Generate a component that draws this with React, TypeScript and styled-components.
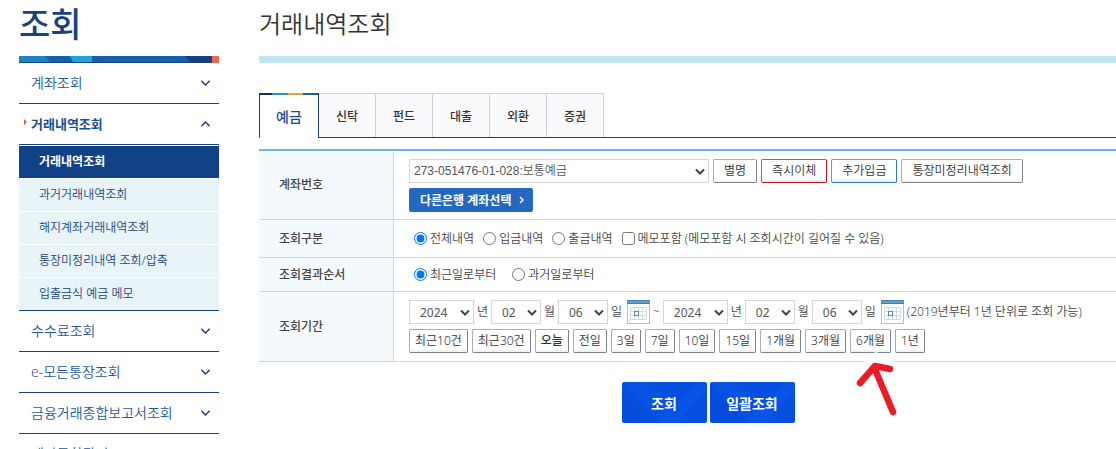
import React from 'react';
import styled, { createGlobalStyle, css } from 'styled-components';

const sans = '"Noto Sans", "Noto Sans CJK KR", sans-serif';

const GlobalStyle = createGlobalStyle`
  *, *::before, *::after { box-sizing: border-box; }
  body {
    margin: 0;
    background: #fff;
    color: #444;
    font-family: ${sans};
    font-size: 12px;
    line-height: 18px;
  }
  button, select, input { font-family: inherit; font-size: inherit; margin: 0; }
  ul { list-style: none; margin: 0; padding: 0; }
  h1, h2 { margin: 0; }
  a { color: inherit; text-decoration: none; }
`;

const Page = styled.div`
  display: flex;
  align-items: flex-start;
  gap: 40px;
  height: 100vh;
  padding-left: 19px;
  overflow: hidden;
`;

const Sidebar = styled.nav`
  flex: 0 0 200px;
  color: #1c4f8f;
`;

const SideTitle = styled.h1`
  height: 56px;
  color: #17427f;
  font-size: 34px;
  font-weight: 500;
  line-height: 48px;
`;

const Ribbon = styled.svg`
  display: block;
  width: 100%;
  height: 7px;
`;

const MenuLink = styled.a<{ $active?: boolean }>`
  position: relative;
  display: flex;
  align-items: center;
  justify-content: space-between;
  height: 41px;
  padding: 0 8px 0 12px;
  border-bottom: 1px solid #17427f;
  color: #1f5a9c;
  font-size: 14px;
  font-weight: 350;
  ${p => p.$active && css`
    font-size: 13px;
    font-weight: 700;
    color: #17508f;
    &::before {
      content: '';
      position: absolute;
      left: 5px;
      top: 15px;
      border: 3px solid transparent;
      border-left-color: #e0603f;
      border-right-width: 0;
    }
  `}
`;

const SubMenu = styled.ul`
  display: grid;
  gap: 1px;
  padding-top: 1px;
  border-bottom: 1px solid #17427f;
`;

const SubLink = styled.a<{ $active?: boolean }>`
  display: block;
  height: 32px;
  padding-left: 20px;
  background: ${p => (p.$active ? '#124286' : '#e9f4f9')};
  color: ${p => (p.$active ? '#fff' : '#1c4580')};
  font-weight: ${p => (p.$active ? 700 : 350)};
  line-height: 32px;
`;

const Main = styled.main`
  flex: 1 0 898px;
`;

const PageTitle = styled.h2`
  height: 63px;
  border-bottom: 7px solid #c0e6f2;
  color: #333;
  font-size: 24px;
  font-weight: 350;
  line-height: 48px;
`;

const Tabs = styled.div`
  display: flex;
  margin: 30px 0 11px;
  border-bottom: 1px solid #17427f;
`;

const Tab = styled.button<{ $active?: boolean }>`
  width: 57px;
  height: 44px;
  padding: 0;
  border: solid #ccd2de;
  border-width: 1px 1px 0 0;
  background: #fafafd;
  color: #333;
  font-weight: 500;
  ${p => p.$active && css`
    width: 60px;
    height: 45px;
    margin-bottom: -1px;
    border: solid #17427f;
    border-width: 0 1px;
    background:
      linear-gradient(90deg, #1d2c5c 0 12px, #2497b8 12px 28px, #e0a440 28px 43px, #1a6496 43px 58px) 0 0 / 100% 2px no-repeat,
      #fff;
    color: #1c4a8c;
    font-size: 14px;
  `}
`;

const FormTable = styled.table`
  width: 100%;
  border-collapse: separate;
  border-spacing: 0;
  border-top: 2px solid #6eb4e8;
`;

const HeadCell = styled.th`
  width: 135px;
  padding: 0 0 0 20px;
  border: solid #d0d6e2;
  border-width: 0 1px 1px 0;
  background: #f4f9fd;
  color: #444;
  font-weight: 500;
  text-align: left;
`;

const Cell = styled.td<{ $height: number }>`
  height: ${p => p.$height}px;
  padding: 0 0 0 15px;
  border-bottom: 1px solid #d0d6e2;
  font-weight: 350;
`;

const Stack = styled.div`
  display: grid;
  gap: 5px;
`;

const Line = styled.div<{ $gap?: number }>`
  display: flex;
  align-items: center;
  gap: ${p => p.$gap ?? 4}px;
  white-space: nowrap;
`;

const SelectBox = styled.span<{ $width: number }>`
  position: relative;
  display: inline-flex;
  width: ${p => p.$width}px;
  height: 24px;
  svg {
    position: absolute;
    right: 4px;
    top: 9px;
    pointer-events: none;
  }
`;

const Select = styled.select<{ $account?: boolean }>`
  appearance: none;
  width: 100%;
  padding: 0 0 0 ${p => (p.$account ? 4 : 10)}px;
  border: 1px solid #d3d6da;
  border-radius: 0;
  background: #fff;
  color: #555;
  font-weight: ${p => (p.$account ? 350 : 400)};
  ${p => p.$account && css`font-family: "Liberation Sans", "Noto Sans CJK KR", sans-serif;`}
`;

const tones = {
  grey: ['#a9adb5', '#7d8189', '#f1f3f5'],
  red: ['#e0444a', '#b8181f', '#fdeaea'],
  blue: ['#4ba3d9', '#2b7cb8', '#e4f3fb'],
};

const SmallButton = styled.button<{ $tone?: keyof typeof tones; $pad?: number; $bold?: boolean }>`
  height: 24px;
  padding: 0 ${p => p.$pad ?? 5}px;
  border: 1px solid ${p => tones[p.$tone ?? 'grey'][0]};
  border-right-color: ${p => tones[p.$tone ?? 'grey'][1]};
  border-bottom-color: ${p => tones[p.$tone ?? 'grey'][1]};
  border-radius: 2px;
  background: #fff;
  box-shadow: inset 0 -2px ${p => tones[p.$tone ?? 'grey'][2]};
  color: #333;
  font-weight: ${p => (p.$bold ? 500 : 350)};
  line-height: 20px;
`;

const OtherBankButton = styled.button`
  display: flex;
  align-items: center;
  justify-content: space-between;
  justify-self: start;
  width: 124px;
  height: 24px;
  padding: 0 9px 0 11px;
  border: 0;
  border-radius: 2px;
  background: #2568bf;
  color: #fff;
  font-weight: 700;
`;

const Choice = styled.label`
  display: inline-flex;
  align-items: center;
  gap: 3px;
  input { width: 13px; height: 13px; }
`;

const Choices = styled.div<{ $gap: number }>`
  display: flex;
  gap: ${p => p.$gap}px;
  padding-left: 5px;
`;

const CalendarButton = styled.button`
  display: flex;
  margin-left: 2px;
  padding: 0;
  border: 0;
  background: none;
`;

const Actions = styled.div`
  display: flex;
  justify-content: center;
  gap: 3px;
  margin-top: 20px;
`;

const ActionButton = styled.button`
  width: 85px;
  height: 41px;
  padding: 0;
  border: 0;
  border-radius: 2px;
  background:
    linear-gradient(135deg, transparent 60%, #0854e6 60% 75%, transparent 75%),
    linear-gradient(45deg, #044cdc 30%, #0652e3 30% 55%, #044ee0 55%);
  color: #fff;
  font-size: 14px;
  font-weight: 700;
`;

const Marked = styled.span`
  position: relative;
  display: inline-flex;
`;

const Pointer = styled.svg`
  position: absolute;
  left: 4px;
  top: 21px;
  pointer-events: none;
`;

const Chevron = ({ up }: { up?: boolean }) => (
  <svg width="11" height="8" viewBox="0 0 11 8" fill="none" stroke="#17427f" strokeWidth="1.5" aria-hidden="true">
    <path d={up ? 'M1.3 6.2 5.5 2l4.2 4.2' : 'M1.3 1.8 5.5 6l4.2-4.2'} />
  </svg>
);

const Calendar = () => (
  <svg width="23" height="24" viewBox="0 0 23 24" aria-hidden="true">
    <rect x=".5" y=".5" width="22" height="23" fill="#fff" stroke="#b9bec4" />
    <rect width="23" height="4" fill="#5f9fd0" />
    <path d="M0 .5h23M0 3.5h23" stroke="#4a80ad" />
    <path d="M3.5 7.5h16v12h-16zM3.5 11.5h16M3.5 15.5h16M7.5 7.5v12M11.5 7.5v12M15.5 7.5v12" fill="none" stroke="#d5dade" />
    <rect x="7.5" y="11.5" width="4" height="4" fill="#fff" stroke="#3f94cf" />
  </svg>
);

const DropDown = ({ label, width, options, account }: { label: string; width: number; options: string[]; account?: boolean }) => (
  <SelectBox $width={width}>
    <Select aria-label={label} $account={account}>
      {options.map(o => <option key={o}>{o}</option>)}
    </Select>
    <svg width="10" height="8" viewBox="0 0 10 8" fill="none" stroke="#444" strokeWidth="2" aria-hidden="true">
      <path d="m1 1.5 4 4 4-4" />
    </svg>
  </SelectBox>
);

const Unit = styled.span`
  width: 11px;
`;

const DateFields = ({ name }: { name: string }) => (
  <>
    <DropDown label={`${name} 년`} width={65} options={['2024', '2023', '2022', '2021', '2020', '2019']} /><Unit>년</Unit>
    <DropDown label={`${name} 월`} width={50} options={['02', '01', '03']} /><Unit>월</Unit>
    <DropDown label={`${name} 일`} width={50} options={['06', '05', '07']} /><Unit>일</Unit>
    <CalendarButton type="button" aria-label={`${name} 달력`}><Calendar /></CalendarButton>
  </>
);

const subItems = ['거래내역조회', '과거거래내역조회', '해지계좌거래내역조회', '통장미정리내역 조회/압축', '입출금식 예금 메모'];
const lowerItems = ['수수료조회', 'e-모든통장조회', '금융거래종합보고서조회', '계좌통합관리'];
const periods = ['최근10건', '최근30건', '오늘', '전일', '3일', '7일', '10일', '15일', '1개월', '3개월', '6개월', '1년'];

export default function App() {
  return (
    <>
      <GlobalStyle />
      <Page>
        <Sidebar>
          <SideTitle>조회</SideTitle>
          <Ribbon viewBox="0 0 200 7" preserveAspectRatio="none" aria-hidden="true">
            <path d="M0 0h200v7H0z" fill="#1560ad" />
            <path d="M0 0h26l5 6H0z" fill="#1a83c6" />
            <path d="M51 0h22v6H54z" fill="#1ea4de" />
            <path d="M166 0h27v6h-22z" fill="#173f7c" />
            <path d="M0 6h193v1H0z" fill="#17427f" />
            <path d="M193 0h7v7h-7z" fill="#e8694c" />
          </Ribbon>
          <MenuLink href="#">계좌조회<Chevron /></MenuLink>
          <MenuLink href="#" $active>거래내역조회<Chevron up /></MenuLink>
          <SubMenu>
            {subItems.map((item, i) => (
              <li key={item}><SubLink href="#" $active={i === 0}>{item}</SubLink></li>
            ))}
          </SubMenu>
          {lowerItems.map(item => <MenuLink href="#" key={item}>{item}<Chevron /></MenuLink>)}
        </Sidebar>

        <Main>
          <PageTitle>거래내역조회</PageTitle>
          <Tabs role="tablist">
            {['예금', '신탁', '펀드', '대출', '외환', '증권'].map((tab, i) => (
              <Tab key={tab} type="button" role="tab" aria-selected={i === 0} $active={i === 0}>{tab}</Tab>
            ))}
          </Tabs>

          <FormTable>
            <tbody>
              <tr>
                <HeadCell scope="row">계좌번호</HeadCell>
                <Cell $height={69}>
                  <Stack>
                    <Line>
                      <DropDown label="계좌번호" width={300} options={['273-051476-01-028:보통예금']} account />
                      <SmallButton type="button" $pad={10}>별명</SmallButton>
                      <SmallButton type="button" $pad={10} $tone="red">즉시이체</SmallButton>
                      <SmallButton type="button" $pad={10} $tone="blue">추가입금</SmallButton>
                      <SmallButton type="button" $pad={10}>통장미정리내역조회</SmallButton>
                    </Line>
                    <OtherBankButton type="button">
                      다른은행 계좌선택
                      <svg width="5" height="8" viewBox="0 0 5 8" fill="none" stroke="#fff" strokeWidth="1.5" aria-hidden="true">
                        <path d="m1 1 3 3-3 3" />
                      </svg>
                    </OtherBankButton>
                  </Stack>
                </Cell>
              </tr>
              <tr>
                <HeadCell scope="row">조회구분</HeadCell>
                <Cell $height={38}>
                  <Choices $gap={9}>
                    <Choice><input type="radio" name="kind" defaultChecked />전체내역</Choice>
                    <Choice><input type="radio" name="kind" />입금내역</Choice>
                    <Choice><input type="radio" name="kind" />출금내역</Choice>
                    <Choice><input type="checkbox" />메모포함 (메모포함 시 조회시간이 길어질 수 있음)</Choice>
                  </Choices>
                </Cell>
              </tr>
              <tr>
                <HeadCell scope="row">조회결과순서</HeadCell>
                <Cell $height={34}>
                  <Choices $gap={16}>
                    <Choice><input type="radio" name="order" defaultChecked />최근일로부터</Choice>
                    <Choice><input type="radio" name="order" />과거일로부터</Choice>
                  </Choices>
                </Cell>
              </tr>
              <tr>
                <HeadCell scope="row">조회기간</HeadCell>
                <Cell $height={70}>
                  <Stack>
                    <Line $gap={3}>
                      <DateFields name="시작" />
                      ~
                      <DateFields name="종료" />
                      (2019년부터 1년 단위로 조회 가능)
                    </Line>
                    <Line>
                      {periods.map(p => p === '6개월' ? (
                        <Marked key={p}>
                          <SmallButton type="button">{p}</SmallButton>
                          <Pointer width="48" height="70" viewBox="0 0 48 70" fill="none" strokeLinecap="round" strokeLinejoin="round" aria-hidden="true">
                            <path d="M18 7l4-3 5 3M12 11h26" stroke="#fff" strokeWidth="4" />
                            <path d="M39 62 20 17M6 33 21 16l15 3" stroke="#ec1c24" strokeWidth="6.5" />
                          </Pointer>
                        </Marked>
                      ) : (
                        <SmallButton key={p} type="button" $bold={p === '오늘'}>{p}</SmallButton>
                      ))}
                    </Line>
                  </Stack>
                </Cell>
              </tr>
            </tbody>
          </FormTable>

          <Actions>
            <ActionButton type="button">조회</ActionButton>
            <ActionButton type="button">일괄조회</ActionButton>
          </Actions>
        </Main>
      </Page>
    </>
  );
}
